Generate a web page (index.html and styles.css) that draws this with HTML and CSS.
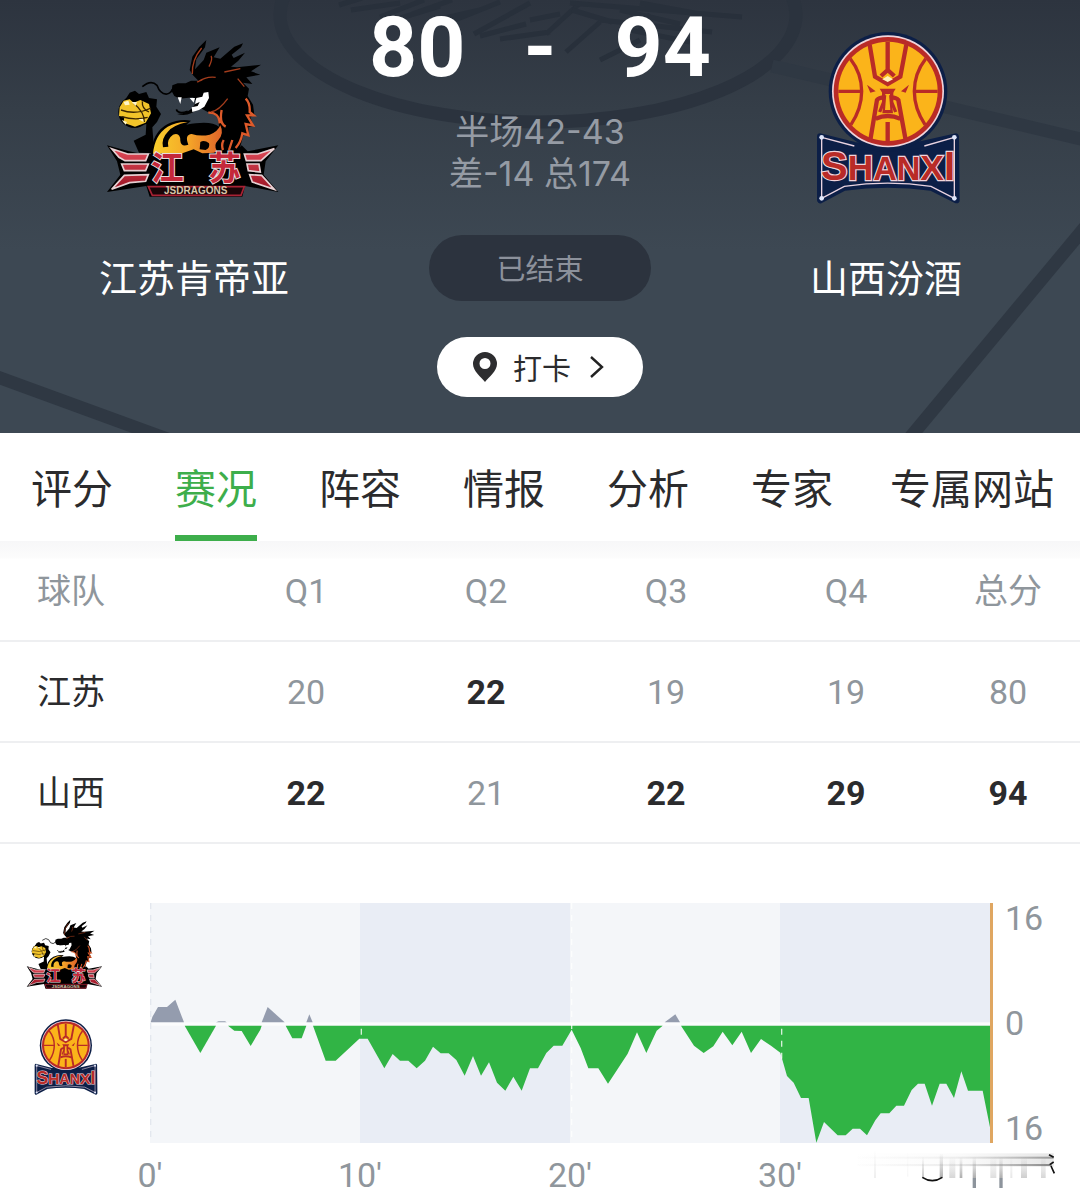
FILE: index.html
```html
<!DOCTYPE html>
<html lang="zh-CN">

<head>
    <meta charset="UTF-8">
    <meta name="viewport" content="width=device-width, initial-scale=1.0">
    <title>江苏肯帝亚 80 - 94 山西汾酒</title>
    <link rel="stylesheet" href="styles.css">
</head>

<body>
    <header class="hero">
        <svg class="court" viewBox="0 0 1080 433" preserveAspectRatio="none" aria-hidden="true">
            <ellipse cx="538" cy="15" rx="258" ry="107" fill="none" stroke="#2b333e" stroke-width="13" />
            <g fill="none" stroke="#2f3843" stroke-width="13">
                <path d="M772 66 L1085 140" />
                <path d="M1086 226 L908 440" />
                <path d="M-5 376 L170 440" />
            </g>
            <g fill="none" stroke="#28303b" stroke-width="5">
                <path d="M339 5 L362 -2 M351 10 L400 3 M380 17 L424 0 M394 20 L440 6 M412 14 L452 0 M440 26 L500 2 M436 20 L480 10 M474 34 L530 3 M480 36 L526 24 M500 39 L550 32 M546 34 L580 3 M530 20 L560 14" />
                <path d="M566 52 L600 22 M600 60 L640 40 M570 3 L742 17 M572 10 L612 22 M600 20 L712 32 M620 10 L680 24 M640 3 L700 14 M630 30 L690 42 M650 14 L640 30" />
            </g>
        </svg>

        <section class="team">
            <svg class="team-logo" viewBox="0 0 630 600" role="img" aria-label="江苏肯帝亚队徽">
                <defs>
                    <linearGradient id="belly" x1="0" y1="0" x2="1" y2="0">
                        <stop offset="0" stop-color="#f8cf2c" />
                        <stop offset="0.5" stop-color="#f5a828" />
                        <stop offset="1" stop-color="#e0642a" />
                    </linearGradient>
                    <linearGradient id="red" x1="0" y1="0" x2="0" y2="1">
                        <stop offset="0" stop-color="#e04a58" />
                        <stop offset="1" stop-color="#9c1424" />
                    </linearGradient>
                </defs>
                <g id="dragon">
                    <!-- arm and ball -->
                    <path d="M108 240 L122 218 L138 212 L150 222 L172 216 L180 234 L204 238 L202 260 L216 282 L204 306 L190 322 L196 400 L150 398 L134 362 L170 344 L172 312 L140 320 L120 280Z" fill="#000" />
                    <circle cx="136" cy="276" r="48" fill="#000" />
                    <path d="M92 262 L104 242 L122 238 L134 248 L154 240 L180 252 L186 280 L170 308 L138 320 L104 308 L106 290 L90 288Z" fill="#f2c42a" />
                    <path d="M96 270 Q140 286 186 264 M98 290 Q136 302 176 292 M134 250 Q166 276 166 306 M160 244 Q158 266 180 276" fill="none" stroke="#3a2500" stroke-width="4" />
                    <path d="M104 246 l14 -4 l4 12 l-14 2z M128 246 l16 0 l-4 12z M98 300 l16 6 l-4 8z M148 298 l14 -2 l2 10z" fill="#fff6c8" />
                    <!-- body -->
                    <path d="M186 402 Q190 336 236 312 Q270 296 306 302 L292 314 Q366 300 390 320 L388 294 Q380 276 356 276 L330 262 Q300 294 264 282 Q302 280 316 256 L322 242 L312 232 L272 236 L256 228 L248 214 L250 196 L266 190 L290 190 L306 182 L328 182 L312 166 L302 150 L310 110 L330 82 L352 60 L348 82 L322 118 L318 148 L344 120 L352 98 L392 82 L374 112 L394 116 L436 80 L462 70 L456 82 L428 104 L434 114 L468 98 L448 122 L426 140 L444 142 L516 134 L486 154 L514 164 L472 172 L490 192 L462 188 L480 206 L476 228 L492 254 L496 284 L484 292 L494 318 L478 322 L480 346 L464 342 L448 402Z" fill="#000" />
                    <path d="M192 402 Q196 346 236 320 Q264 304 296 306 Q250 316 236 336 Q216 356 222 382 L238 380 Q232 358 252 344 Q274 336 274 362 Q276 382 298 374 Q286 344 308 342 Q334 350 362 344 Q386 336 394 316 Q406 340 388 360 Q372 376 384 394 L368 402Z" fill="url(#belly)" />
                    <path d="M334 366 Q346 358 360 370 Q364 384 350 390 L332 388Z" fill="#000" />
                    <path d="M358 278 Q390 276 392 310 M398 270 Q390 310 410 320 M402 390 Q396 374 404 360 M470 236 Q484 250 482 276 L494 286 L474 286 L492 316 L470 312 L478 346 L460 340 Q456 366 440 384 M430 360 L420 390" fill="none" stroke="#dd5a2a" stroke-width="7" />
                    <path d="M366 276 Q390 272 416 236 M326 186 Q352 168 380 172 M324 186 L340 180 M310 162 Q308 120 338 84 M360 140 Q372 116 366 108 M406 156 L454 146 M446 176 L466 200" fill="none" stroke="#a33c1c" stroke-width="4" />
                    <path d="M266 232 l12 0 l-4 20z M302 234 l16 0 l-4 14z M322 234 L340 230 L344 218 L358 216 L360 234 L346 260 L330 270 L310 276 L308 262 L326 258 L332 246 L318 252Z" fill="#fff" />
                    <path d="M160 200 Q186 178 204 196 Q214 224 234 222 Q246 220 250 208 M262 268 Q268 284 296 274" fill="none" stroke="#000" stroke-width="5" />
                    <!-- banner -->
                    <path d="M54 376 L120 394 L160 402 L280 400 L314 388 L340 400 L440 396 L458 376 L476 394 L568 376 L530 424 L524 464 L568 516 L468 498 L460 530 L182 530 L172 498 L54 516 L94 464 L84 424Z" fill="#000" />
                    <path d="M68 386 L116 402 L178 402 L170 422 L108 422 L90 412Z M98 432 L178 432 L170 452 L106 452Z M68 508 L106 466 L178 464 L170 484 L122 488Z M556 386 L506 402 L466 402 L472 422 L516 422Z M510 432 L474 432 L478 452 L514 456Z M556 508 L518 466 L482 464 L490 486Z" fill="url(#red)" stroke="#e6cfd2" stroke-width="5" />
                    <text x="186" y="480" class="logo-name">江</text>
                    <text x="358" y="480" class="logo-name">苏</text>
                    <path d="M178 500 L466 500 L456 526 L190 526Z" fill="#1a0508" stroke="#a82234" stroke-width="5" />
                    <text x="320" y="523" class="logo-small">JSDRAGONS</text>
                </g>
            </svg>
            <h2>江苏肯帝亚</h2>
        </section>

        <section class="summary">
            <h1 class="score"><span>80</span><span>-</span><span>94</span></h1>
            <p class="info">半场42-43<br>差-14 总174</p>
            <p class="status">已结束</p>
            <button class="checkin" type="button">
                <svg width="24" height="30" viewBox="0 0 24 30" aria-hidden="true">
                    <path d="M12 0 A12 12 0 0 0 0 12 C0 19 8 25 12 30 C16 25 24 19 24 12 A12 12 0 0 0 12 0Z M12 6 A5 5 0 0 1 12 17 A5 5 0 0 1 12 6Z" fill="#2d2d2f" fill-rule="evenodd" />
                </svg>
                <span>打卡</span>
                <svg width="18" height="22" viewBox="0 0 18 22" aria-hidden="true">
                    <path d="M4 1 L15 11 L4 21" fill="none" stroke="#222" stroke-width="2.4" />
                </svg>
            </button>
        </section>

        <section class="team">
            <svg class="team-logo" viewBox="0 0 570 600" role="img" aria-label="山西汾酒队徽">
                <g id="shanxi">
                    <path d="M88 350 L190 376 Q290 392 380 376 L494 350 L496 540 L420 502 Q290 484 160 502 L88 540Z" fill="#0c1f47" stroke="#0c1f47" stroke-width="20" stroke-linejoin="round" />
                    <circle cx="291" cy="214" r="178" fill="#0c1f47" />
                    <circle cx="291" cy="214" r="168" fill="#f0d5dc" />
                    <circle cx="291" cy="214" r="163" fill="#b92b27" />
                    <circle cx="291" cy="214" r="149" fill="#fbb41a" />
                    <g fill="none" stroke="#b92b27" stroke-width="10">
                        <path d="M142 214 H210 M370 214 H440 M178 116 Q212 160 212 214 Q212 266 180 314 M404 116 Q370 160 370 214 Q370 266 402 314" />
                    </g>
                    <g fill="none" stroke="#b92b27" stroke-width="13">
                        <path d="M236 74 L252 170 L290 192 L328 170 L346 74 M290 66 V150 L270 168 M290 150 L310 168" />
                        <path d="M238 360 L258 240 Q264 232 280 232 M344 360 L322 240 Q316 232 300 232" />
                        <path d="M254 296 Q290 280 328 296" />
                        <path d="M290 306 V364" />
                        <path d="M278 214 L278 246 L266 276 M302 214 L302 246 L314 276" stroke-width="10" />
                    </g>
                    <path d="M266 206 H314 L304 222 H276Z M228 194 L254 214 L238 218Z M354 194 L330 214 L344 218Z M280 226 H300 L306 280 H274Z" fill="#b92b27" />
                    <path d="M286 222 H294 L298 270 H282Z" fill="#fbb41a" />
                    <path d="M290 168 L306 178 L290 186 L274 178Z" fill="#fff0b8" />
                    <path d="M92 352 L92 535 L160 499 Q290 480 420 499 L490 535 L490 352 L400 378 M92 352 L190 378" fill="none" stroke="#e9d3e0" stroke-width="4" />
                    <text x="291" y="480" class="logo-letters"><tspan font-size="120">S</tspan><tspan font-size="106">H</tspan><tspan font-size="98">A</tspan><tspan font-size="98">N</tspan><tspan font-size="106">X</tspan><tspan font-size="120">I</tspan></text>
                    <g fill="#dfe6fb">
                        <circle cx="92" cy="352" r="7" />
                        <circle cx="490" cy="352" r="7" />
                        <circle cx="92" cy="535" r="7" />
                        <circle cx="490" cy="535" r="7" />
                    </g>
                </g>
            </svg>
            <h2>山西汾酒</h2>
        </section>
    </header>

    <nav class="tabs">
        <a href="#rating"><span>评分</span></a>
        <a href="#live" class="active"><span>赛况</span></a>
        <a href="#lineup"><span>阵容</span></a>
        <a href="#news"><span>情报</span></a>
        <a href="#analysis"><span>分析</span></a>
        <a href="#expert"><span>专家</span></a>
        <a href="#site"><span>专属网站</span></a>
    </nav>

    <main id="live">
        <table class="quarters">
            <thead>
                <tr>
                    <th>球队</th>
                    <th>Q1</th>
                    <th>Q2</th>
                    <th>Q3</th>
                    <th>Q4</th>
                    <th>总分</th>
                </tr>
            </thead>
            <tbody>
                <tr>
                    <th>江苏</th>
                    <td>20</td>
                    <td class="win">22</td>
                    <td>19</td>
                    <td>19</td>
                    <td>80</td>
                </tr>
                <tr>
                    <th>山西</th>
                    <td class="win">22</td>
                    <td>21</td>
                    <td class="win">22</td>
                    <td class="win">29</td>
                    <td class="win">94</td>
                </tr>
            </tbody>
        </table>

        <section class="chart">
            <div class="chart-teams">
                <svg viewBox="0 0 630 600" role="img" aria-label="江苏"><use href="#dragon" /></svg>
                <svg viewBox="0 0 570 600" role="img" aria-label="山西"><use href="#shanxi" /></svg>
            </div>
            <svg class="plot" viewBox="0 0 2529 720" preserveAspectRatio="none" role="img" aria-label="分差走势">
                <rect width="630" height="720" fill="#f4f6f9" />
                <rect x="630" width="630" height="720" fill="#e9edf5" />
                <rect x="1260" width="630" height="720" fill="#f4f6f9" />
                <rect x="1890" width="630" height="720" fill="#e9edf5" />
                <rect y="358" width="2520" height="10" fill="#fbfcfd" />
                <!-- home lead -->
                <g fill="#949cae">
                    <path d="M2 358 L7 342 L24 312 L51 312 L76 290 L102 358Z" />
                    <path d="M198 358 L206 355 L225 355 L230 358Z" />
                    <path d="M335 358 L353 312 L404 358Z" />
                    <path d="M469 358 L478 334 L488 358Z" />
                    <path d="M1544 358 L1576 334 L1590 358Z" />
                </g>
                <!-- away lead -->
                <g fill="#31b445">
                    <path d="M104 368 L151 450 L198 368Z" />
                    <path d="M234 368 L253 383 L275 384 L302 429 L331 380 L335 368Z" />
                    <path d="M407 368 L427 406 L455 406 L469 368Z" />
                    <path d="M489 368 L527 473 L557 473 L628 407 L653 407 L703 496 L728 453 L750 473 L775 473 L800 496 L825 473 L849 431 L872 451 L896 451 L919 471 L944 518 L969 459 L993 518 L1017 478 L1041 539 L1066 563 L1090 521 L1115 563 L1140 496 L1164 496 L1189 450 L1211 428 L1237 428 L1265 380 L1292 435 L1315 496 L1345 496 L1374 542 L1433 452 L1461 388 L1489 450 L1520 383 L1538 368Z" />
                    <path d="M1593 368 L1632 428 L1661 450 L1690 430 L1718 386 L1747 427 L1775 386 L1803 450 L1833 408 L1863 428 L1891 449 L1911 519 L1931 539 L1953 585 L1976 585 L1999 719 L2022 657 L2063 697 L2087 697 L2108 677 L2130 677 L2151 697 L2176 652 L2192 631 L2218 631 L2239 608 L2262 608 L2285 561 L2304 542 L2324 542 L2346 608 L2369 542 L2389 542 L2412 585 L2434 505 L2454 563 L2498 563 L2520 673 L2520 368Z" />
                </g>
                <g stroke="#fff" stroke-width="4" stroke-dasharray="18 18" opacity="0.8">
                    <path d="M634 377 V407" />
                    <path d="M1265 0 V720" />
                    <path d="M1895 377 V467" />
                </g>
                <path d="M2 0 V720" stroke="#e3e7ee" stroke-width="4" stroke-dasharray="18 18" />
                <rect x="2520" width="9" height="720" fill="#dfa661" />
            </svg>
            <div class="chart-scale">
                <span>16</span>
                <span>0</span>
                <span>16</span>
            </div>
        </section>

        <div class="chart-time">
            <span>0'</span>
            <span>10'</span>
            <span>20'</span>
            <span>30'</span>
            <svg class="smudge" viewBox="0 0 600 120" aria-hidden="true">
                <defs>
                    <linearGradient id="streak">
                        <stop offset="0" stop-color="#999" stop-opacity="0.02" />
                        <stop offset="0.5" stop-color="#777" stop-opacity="0.2" />
                        <stop offset="1" stop-color="#222" stop-opacity="0.8" />
                    </linearGradient>
                    <linearGradient id="fade" x1="0" y1="0" x2="0" y2="1">
                        <stop offset="0" stop-color="#888" stop-opacity="0" />
                        <stop offset="1" stop-color="#777" stop-opacity="0.6" />
                    </linearGradient>
                </defs>
                <rect y="10" width="590" height="40" fill="url(#streak)" opacity="0.15" />
                <rect y="20" width="590" height="6" fill="url(#streak)" opacity="0.5" />
                <rect y="42" width="584" height="6" fill="url(#streak)" opacity="0.6" />
                <g fill="url(#fade)">
                    <rect x="52" y="0" width="4" height="84" opacity="0.3" />
                    <rect x="150" y="0" width="4" height="80" opacity="0.1" />
                    <rect x="195" y="20" width="6" height="64" opacity="0.7" />
                    <rect x="248" y="10" width="10" height="74" />
                    <rect x="277" y="20" width="18" height="64" opacity="0.5" />
                    <rect x="308" y="20" width="8" height="64" />
                    <rect x="347" y="20" width="10" height="64" />
                    <rect x="400" y="20" width="18" height="64" opacity="0.4" />
                    <rect x="427" y="20" width="10" height="64" />
                    <rect x="460" y="20" width="6" height="64" opacity="0.3" />
                    <rect x="492" y="20" width="18" height="64" opacity="0.6" />
                    <rect x="552" y="20" width="14" height="64" opacity="0.5" />
                </g>
                <path d="M347 84 H357 V114 H347Z M427 84 H437 V114 H427Z" fill="#8d949c" />
                <path d="M196 82 Q226 102 256 82 M576 14 L590 22 M578 44 L590 36 M582 48 L592 70" fill="none" stroke="#111" stroke-width="5" />
            </svg>
        </div>
    </main>
</body>

</html>
```
FILE: styles.css
```css
* {
    box-sizing: border-box;
}

body {
    margin: 0;
    background-color: #fff;
    color: #2b2b2d;
    font-family: Roboto, "Noto Sans CJK SC", sans-serif;
}

h1,
h2,
p {
    margin: 0;
    font-weight: 400;
}

a {
    color: inherit;
    text-decoration: none;
}

/* logo lettering */
.logo-name {
    font-family: "Noto Sans CJK SC", sans-serif;
    font-size: 98px;
    font-weight: bold;
    fill: #c4283a;
    stroke: #e8dcde;
    stroke-width: 6px;
    paint-order: stroke;
}

.logo-small {
    font-family: "Liberation Sans", sans-serif;
    font-size: 30px;
    font-weight: bold;
    fill: #d8c6a8;
    text-anchor: middle;
}

.logo-letters {
    font-family: "Liberation Sans", sans-serif;
    font-weight: bold;
    fill: #b92b27;
    stroke: #f0d5dc;
    stroke-width: 7px;
    paint-order: stroke;
    text-anchor: middle;
}

/* header */
.hero {
    position: relative;
    display: grid;
    grid-template-columns: repeat(3, 1fr);
    padding: 0 21px 36px;
    background: linear-gradient(#2d343f, #353e48 110px, #3d4853 250px);
    color: #fff;
    text-align: center;
}

.court {
    position: absolute;
    top: 0;
    left: 0;
    width: 100%;
    height: 100%;
}

.team,
.summary {
    position: relative;
    display: flex;
    flex-direction: column;
    align-items: center;
}

.team {
    padding-top: 20px;
}

.team-logo {
    height: 200px;
}

.team h2 {
    margin-top: 36px;
    font-size: 38px;
    line-height: 46px;
}

.score {
    display: flex;
    gap: 58px;
    font-size: 84px;
    font-weight: bold;
    line-height: 96px;
}

.info {
    margin-top: 15px;
    color: #959ba4;
    font-family: Inter, "Noto Sans CJK SC", sans-serif;
    font-size: 34px;
    line-height: 42px;
}

.status {
    margin-top: 40px;
    padding: 4px 67px 0;
    border-radius: 33px;
    background-color: #2c333e;
    color: #8c919b;
    font-size: 29px;
    line-height: 62px;
}

.checkin {
    display: flex;
    align-items: center;
    gap: 16px;
    height: 60px;
    margin-top: 36px;
    padding: 0 38px 0 36px;
    border: none;
    border-radius: 30px;
    background-color: #fff;
    color: #2b2b2d;
    font-family: inherit;
    font-size: 29px;
    cursor: pointer;
}

/* tabs */
.tabs {
    display: grid;
    grid-template-columns: repeat(6, 2fr) 3fr;
    font-size: 41px;
    line-height: 90px;
    text-align: center;
    white-space: nowrap;
}

.tabs span {
    display: inline-block;
    padding-top: 12px;
    border-bottom: 6px solid transparent;
    vertical-align: top;
}

.tabs .active span {
    color: #3dae4b;
    border-bottom-color: #3dae4b;
}

/* quarter scores */
.quarters {
    width: 100%;
    border-spacing: 0;
    table-layout: fixed;
    background: linear-gradient(#f7f7f8, #fcfcfc 17px, #fff 18px);
    color: #8f969c;
    font-size: 34px;
    line-height: 40px;
}

.quarters th,
.quarters td {
    width: 16.6667%;
    height: 101px;
    padding: 0;
    border-bottom: 2px solid #eeeff1;
    font-weight: 400;
    text-align: center;
}

.quarters th:first-child {
    width: 20%;
    padding-left: 37px;
    text-align: left;
}

.quarters th:last-child {
    width: 13.3333%;
}

.quarters tbody th {
    color: #2b2b2d;
}

.quarters .win {
    color: #2b2b2d;
    font-weight: bold;
}

/* lead chart */
.chart {
    display: grid;
    grid-template-columns: 150px 1fr 87px;
    margin-top: 59px;
}

.chart-teams {
    display: flex;
    flex-direction: column;
    gap: 15px;
    width: 130px;
    padding-top: 8px;
}

.chart-teams svg {
    width: 100%;
    height: 88px;
}

.plot {
    width: 100%;
    height: 240px;
}

.chart-scale {
    display: flex;
    flex-direction: column;
    justify-content: space-between;
    padding-left: 12px;
    color: #8f969c;
    font-size: 34px;
    line-height: 30px;
}

.chart-time {
    position: relative;
    display: grid;
    grid-template-columns: repeat(4, 1fr);
    padding: 12px 195px 8px 45px;
    color: #8f969c;
    font-size: 34px;
    line-height: 40px;
    text-align: center;
}

.smudge {
    position: absolute;
    top: 7px;
    right: 23px;
    width: 200px;
    height: 40px;
}
```
